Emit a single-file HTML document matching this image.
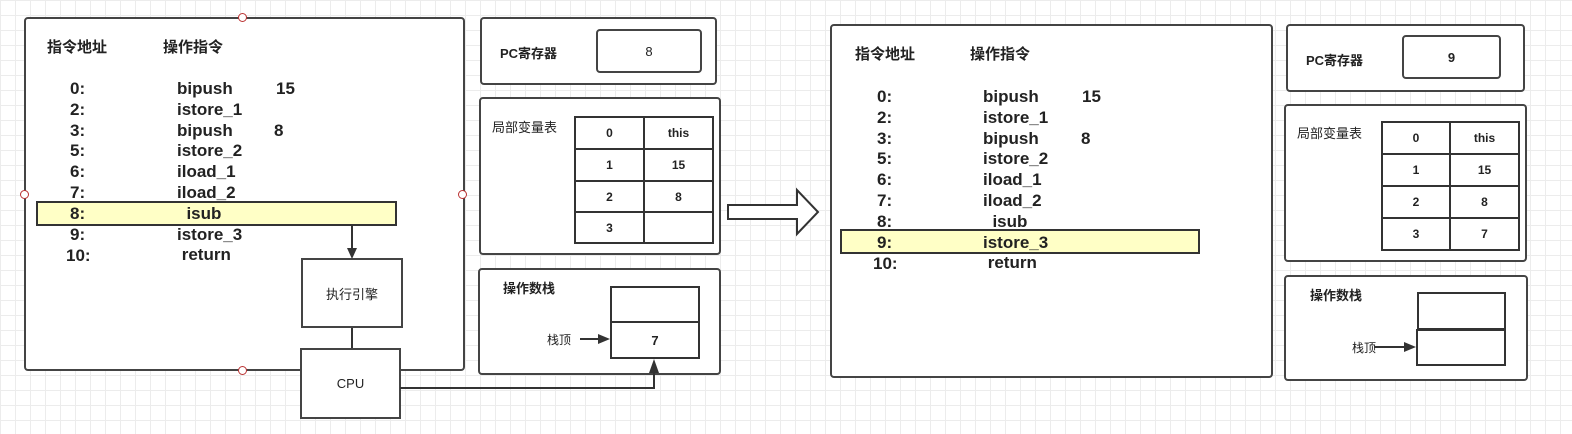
<!DOCTYPE html>
<html><head><meta charset="utf-8"><style>
body{margin:0;width:1572px;height:434px;overflow:hidden;background:#fff;
background-image:linear-gradient(#ececec 1px,transparent 1px),linear-gradient(90deg,#ececec 1px,transparent 1px);
background-size:15px 15px;background-position:0 0;font-family:"Liberation Sans","Noto Sans CJK SC",sans-serif;color:#222;position:relative}
.a{position:absolute;box-sizing:border-box}
.box{border:2px solid #444;border-radius:4px;background:#fff}
.t{position:absolute;white-space:nowrap}
.code{font-size:17px;font-weight:bold;line-height:20.8px}
.h{font-size:15px;font-weight:bold}
.cell{position:absolute;border:2px solid #333;box-sizing:border-box;display:flex;align-items:center;justify-content:center;font-size:12px;font-weight:bold}
.hd{position:absolute;width:9px;height:9px;border:1px solid #b33;border-radius:50%;background:#fff;box-sizing:border-box}
</style></head><body>
<!-- LEFT -->
<div class="a box" style="left:24px;top:17px;width:441px;height:354px"></div>
<div class="hd" style="left:238px;top:13px"></div><div class="hd" style="left:20px;top:190px"></div>
<div class="hd" style="left:458px;top:190px"></div><div class="hd" style="left:238px;top:366px"></div>
<div class="t h" style="left:47px;top:36px">指令地址</div>
<div class="t h" style="left:163px;top:36px">操作指令</div>
<div class="a" style="left:36px;top:201px;width:361px;height:25px;background:#ffffc6;border:2px solid #333"></div>
<div class="t code" style="left:70px;top:79px">0:<br>2:<br>3:<br>5:<br>6:<br>7:<br>8:<br>9:</div>
<div class="t code" style="left:66px;top:246px">10:</div>
<div class="t code" style="left:177px;top:79px">bipush<br>istore_1<br>bipush<br>istore_2<br>iload_1<br>iload_2<br>&nbsp;&nbsp;isub<br>istore_3<br>&nbsp;return</div>
<div class="t code" style="left:276px;top:79px">15</div>
<div class="t code" style="left:274px;top:121px">8</div>
<div class="a" style="left:301px;top:258px;width:102px;height:70px;border:2px solid #444;background:#fff;display:flex;align-items:center;justify-content:center;font-size:13px">执行引擎</div>
<div class="a" style="left:300px;top:348px;width:101px;height:71px;border:2px solid #444;background:#fff;display:flex;align-items:center;justify-content:center;font-size:13px">CPU</div>
<div class="a box" style="left:480px;top:17px;width:237px;height:68px"></div>
<div class="t" style="left:500px;top:43px;font-size:13px;font-weight:bold">PC寄存器</div>
<div class="a box" style="left:596px;top:29px;width:106px;height:44px;display:flex;align-items:center;justify-content:center;font-size:13px">8</div>
<div class="a box" style="left:479px;top:97px;width:242px;height:158px"></div>
<div class="t" style="left:492px;top:117px;font-size:13px">局部变量表</div>
<div class="cell" style="left:574px;top:116px;width:71px;height:34px">0</div><div class="cell" style="left:643px;top:116px;width:71px;height:34px">this</div>
<div class="cell" style="left:574px;top:148px;width:71px;height:34px">1</div><div class="cell" style="left:643px;top:148px;width:71px;height:34px">15</div>
<div class="cell" style="left:574px;top:180px;width:71px;height:33px">2</div><div class="cell" style="left:643px;top:180px;width:71px;height:33px">8</div>
<div class="cell" style="left:574px;top:211px;width:71px;height:33px">3</div><div class="cell" style="left:643px;top:211px;width:71px;height:33px"></div>
<div class="a box" style="left:478px;top:268px;width:243px;height:107px"></div>
<div class="t" style="left:503px;top:278px;font-size:13px;font-weight:bold">操作数栈</div>
<div class="cell" style="left:610px;top:286px;width:90px;height:37px"></div>
<div class="cell" style="left:610px;top:321px;width:90px;height:38px;font-size:13px">7</div>
<div class="t" style="left:547px;top:331px;font-size:12px">栈顶</div>
<!-- RIGHT -->
<div class="a box" style="left:830px;top:24px;width:443px;height:354px"></div>
<div class="t h" style="left:855px;top:43px">指令地址</div>
<div class="t h" style="left:970px;top:43px">操作指令</div>
<div class="a" style="left:840px;top:229px;width:360px;height:25px;background:#ffffc6;border:2px solid #333"></div>
<div class="t code" style="left:877px;top:87px">0:<br>2:<br>3:<br>5:<br>6:<br>7:<br>8:<br>9:</div>
<div class="t code" style="left:873px;top:254px">10:</div>
<div class="t code" style="left:983px;top:87px">bipush<br>istore_1<br>bipush<br>istore_2<br>iload_1<br>iload_2<br>&nbsp;&nbsp;isub<br>istore_3<br>&nbsp;return</div>
<div class="t code" style="left:1082px;top:87px">15</div>
<div class="t code" style="left:1081px;top:129px">8</div>
<div class="a box" style="left:1286px;top:24px;width:239px;height:68px"></div>
<div class="t" style="left:1306px;top:50px;font-size:13px;font-weight:bold">PC寄存器</div>
<div class="a box" style="left:1402px;top:35px;width:99px;height:44px;display:flex;align-items:center;justify-content:center;font-size:13px;font-weight:bold">9</div>
<div class="a box" style="left:1284px;top:104px;width:243px;height:158px"></div>
<div class="t" style="left:1297px;top:123px;font-size:13px">局部变量表</div>
<div class="cell" style="left:1381px;top:121px;width:70px;height:34px">0</div><div class="cell" style="left:1449px;top:121px;width:71px;height:34px">this</div>
<div class="cell" style="left:1381px;top:153px;width:70px;height:34px">1</div><div class="cell" style="left:1449px;top:153px;width:71px;height:34px">15</div>
<div class="cell" style="left:1381px;top:185px;width:70px;height:34px">2</div><div class="cell" style="left:1449px;top:185px;width:71px;height:34px">8</div>
<div class="cell" style="left:1381px;top:217px;width:70px;height:34px">3</div><div class="cell" style="left:1449px;top:217px;width:71px;height:34px">7</div>
<div class="a box" style="left:1284px;top:275px;width:244px;height:106px"></div>
<div class="t" style="left:1310px;top:285px;font-size:13px;font-weight:bold">操作数栈</div>
<div class="cell" style="left:1417px;top:292px;width:89px;height:38px"></div>
<div class="cell" style="left:1416px;top:329px;width:90px;height:37px"></div>
<div class="t" style="left:1352px;top:339px;font-size:12px">栈顶</div>
<svg class="a" style="left:1370px;top:340px" width="50" height="14"><path d="M4 7H36" stroke="#333" stroke-width="2"/><path d="M34 2L46 7L34 12Z" fill="#333"/></svg>
<svg class="a" style="left:0;top:0" width="830" height="434">
<path d="M352 226V250M352 328V348M400 388H654V372" stroke="#333" stroke-width="2" fill="none"/>
<path d="M347 248L357 248L352 259Z M649 373L659 373L654 359Z" fill="#333"/>
<path d="M580 339H600" stroke="#333" stroke-width="2"/><path d="M598 334L610 339L598 344Z" fill="#333"/>
<path d="M728 205H797V190L818 212L797 234V219H728Z" fill="#fff" stroke="#333" stroke-width="2"/>
</svg>
</body></html>
